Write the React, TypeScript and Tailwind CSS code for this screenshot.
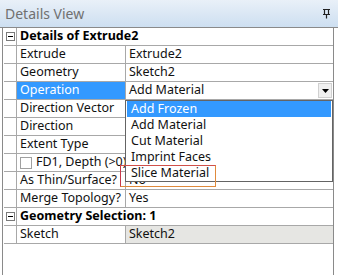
import React from "react";

const font = { fontFamily: '"Noto Sans", "Liberation Sans", sans-serif' };

function Row({ name, value, valueBg = "" }: { name: React.ReactNode; value: React.ReactNode; valueBg?: string }) {
  return (
    <div className="flex h-[18px] border-b border-[#a8a8a8]">
      <div className="w-[13px] shrink-0 bg-white border-r border-[#a8a8a8]" />
      <div className="w-[109px] shrink-0 border-r border-[#a8a8a8] pl-[3px] flex items-center text-[12.5px] text-[#111] leading-none whitespace-nowrap">{name}</div>
      <div className={`flex-1 pl-[3px] flex items-center text-[12.5px] text-[#111] leading-none whitespace-nowrap ${valueBg}`}>{value}</div>
    </div>
  );
}

function Header({ text }: { text: string }) {
  return (
    <div className="flex h-[18px] border-b border-[#a8a8a8]">
      <div className="w-[13px] shrink-0 border-r border-[#a8a8a8] flex items-center justify-center">
        <div className="w-[9px] h-[9px] border border-[#7a7a7a] flex items-center justify-center">
          <div className="w-[5px] h-px bg-black" />
        </div>
      </div>
      <div className="flex-1 pl-[3px] flex items-center text-[12.5px] font-bold text-black leading-none whitespace-nowrap">{text}</div>
    </div>
  );
}

export default function App() {
  return (
    <div className="relative w-[338px] h-[275px] bg-white overflow-hidden" style={font}>
      <div className="h-[28px] flex items-center justify-between px-[5px] bg-gradient-to-b from-[#e9f0f8] to-[#cddff1] border-b border-[#8a8a8a]">
        <span className="text-[14px] text-[#707070]">Details View</span>
        <svg width="9" height="11" viewBox="0 0 9 11" className="mr-[2px]">
          <path d="M1 1.5H8 M2.5 1.5V6.5 M6.5 1.5V6.5 M1 6.5H8 M4.5 6.5V10.5" stroke="#222" strokeWidth="1.2" fill="none" />
        </svg>
      </div>
      <div className="ml-[2px] w-[332px] border-l border-r border-[#8a8a8a] h-[247px]">
        <div className="ml-px">
          <Header text="Details of Extrude2" />
          <Row name="Extrude" value="Extrude2" />
          <Row name="Geometry" value="Sketch2" />
          <div className="flex h-[18px] border-b border-[#a8a8a8]">
            <div className="w-[13px] shrink-0 border-r border-[#a8a8a8]" />
            <div className="w-[109px] shrink-0 border-r border-[#a8a8a8] pl-[3px] flex items-center text-[12.5px] text-white bg-[#3399ff] leading-none">Operation</div>
            <div className="flex-1 flex items-center text-[12.5px] text-[#111] leading-none pl-[3px] relative">
              Add Material
              <div className="absolute right-px top-px bottom-px w-[14px] bg-[#f0f0f0] border border-[#d0d0d0] flex items-center justify-center">
                <svg width="7" height="4" viewBox="0 0 7 4"><path d="M0 0H7L3.5 4Z" fill="#000" /></svg>
              </div>
            </div>
          </div>
          <Row name="Direction Vector" value="" />
          <Row name="Direction" value="" />
          <Row name="Extent Type" value="" />
          <Row
            name={
              <span className="flex items-center gap-[4px] whitespace-nowrap">
                <span className="w-[12px] h-[12px] border border-[#a0a0a0] bg-white inline-block shrink-0" />
                <span>FD1, Depth (&gt;0)</span>
              </span>
            }
            value=""
          />
          <Row name="As Thin/Surface?" value="No" />
          <Row name="Merge Topology?" value="Yes" />
          <Header text="Geometry Selection: 1" />
          <Row name="Sketch" value="Sketch2" valueBg="bg-[#e6e6e3]" />
        </div>
      </div>

      <div className="absolute left-[125px] top-[100px] w-[208px] h-[82px] bg-white border border-[#646464] flex flex-col text-[12.5px] text-[#111] leading-none">
        <div className="h-[16px] bg-[#3399ff] text-white flex items-center pl-[4px] mx-px">Add Frozen</div>
        <div className="h-[16px] flex items-center pl-[5px]">Add Material</div>
        <div className="h-[16px] flex items-center pl-[5px]">Cut Material</div>
        <div className="h-[16px] flex items-center pl-[5px]">Imprint Faces</div>
        <div className="h-[16px] flex items-center pl-[5px]">Slice Material</div>
      </div>
      <div className="absolute left-[120px] top-[165px] w-[96px] h-[22px] border border-[#e08a3c] border-l-[#c8384a] border-t-[#d0504a]" />
    </div>
  );
}
